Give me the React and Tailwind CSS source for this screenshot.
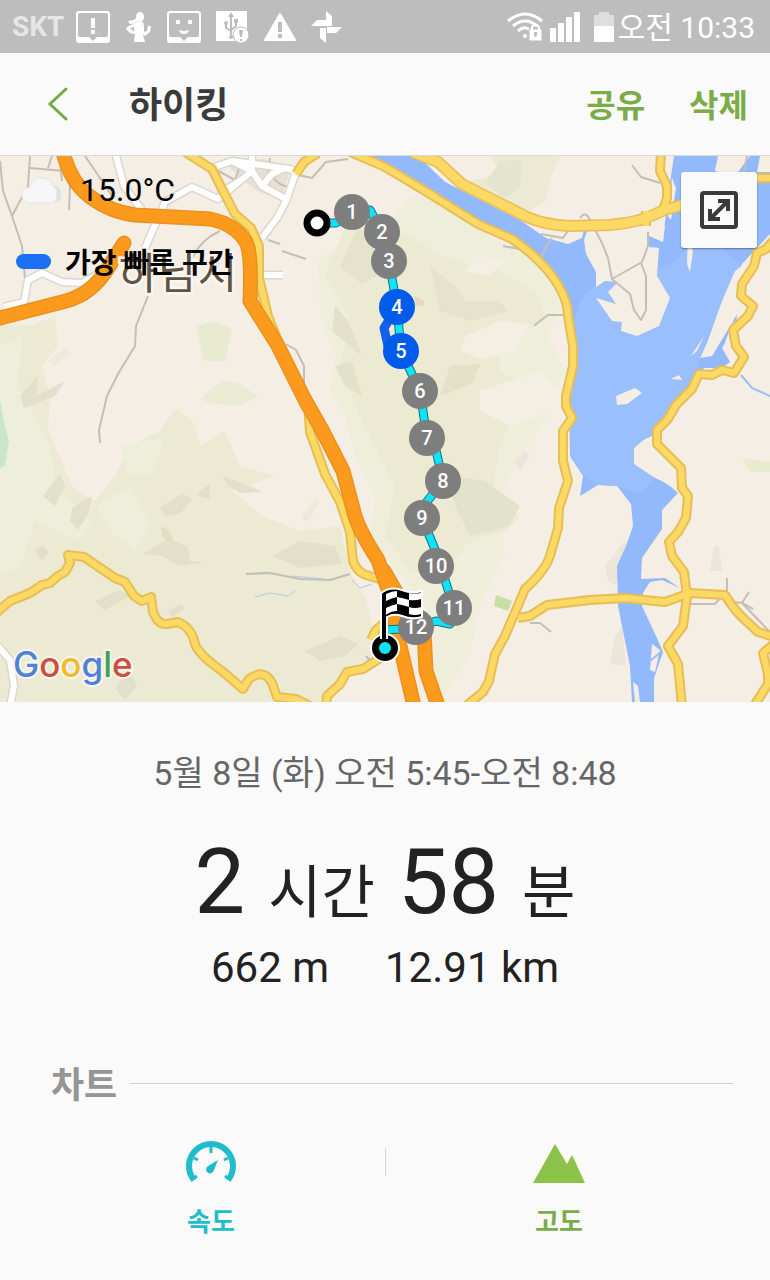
import React from 'react';

const FONT = "font-['Roboto','Noto_Sans_CJK_KR',sans-serif]";

const markers = [
  { n: 1, x: 352, y: 56 },
  { n: 2, x: 382, y: 76 },
  { n: 3, x: 389, y: 105 },
  { n: 4, x: 397, y: 151, fast: true },
  { n: 5, x: 401, y: 195, fast: true },
  { n: 6, x: 420, y: 235 },
  { n: 7, x: 427, y: 282 },
  { n: 8, x: 443, y: 325 },
  { n: 12, x: 416, y: 471 },
  { n: 9, x: 422, y: 362 },
  { n: 10, x: 436, y: 410 },
  { n: 11, x: 454, y: 452 },
];

const routePath =
  'M317 67L336 67L352 56L370 54L382 76L389 105L397 151L401 195L420 235L427 282L435 290L443 325L422 352L422 362L436 396L454 452L450 468L436 465L416 472L385 474';

const riverRoad =
  'M412 -4 L438 6 L462 28 L527 61 Q545 69 570 70 L610 69 Q640 67 664 54 L690 47';

const yellowRoads = [
  'M185 -4 L212 13 L222 33 L235 58 L251 72 L259 90 L259 122 L268 160 L282 195',
  'M296 18 L304 6 L318 -3',
  'M350 -4 L385 11 L430 38 L478 68 L512 83 Q537 100 552 120 Q568 142 568 160 L573 190 L573 210 L566 240 L566 250 L572 262 L563 275 L563 305 L568 325 L559 352 L558 372 L550 400 Q545 415 525 433 L505 480 L495 498 L489 525 L483 536 L466 550',
  'M518 462 L530 460 L547 449 L590 444 L625 442 L665 446 L690 437 L725 439 Q735 455 745 464 L758 476 L774 481',
  'M661 -4 L660 15 L667 30 L667 42 L663 54',
  'M646 55 L646 70',
  'M757 22 L774 22',
  'M774 84 L766 93 L757 97 L754 110 L742 128 L741 140 L753 150 L748 160 L733 174 L736 190 L744 201 L734 217 L722 214 L712 219 L699 218 L692 233 L676 249 L668 263 L657 274 L657 288 L681 312 L682 332 L688 340 L686 362 L678 376 L669 386 L672 400 L684 416 L687 440 L683 470 L668 490 L678 508 L682 550',
  'M774 488 L763 497 L768 518 L768 528 L754 550',
  'M308 246 L310 276 L325 318 L340 346 L350 376 L353 405 Q357 416 366 419 L390 426',
  'M-4 457 L10 445 L30 437 L42 429 L50 427 L58 420 L65 416 L70 407 L68 399 L84 401 L115 422 L125 426 L134 440 L142 445 L151 441 L153 456 Q158 469 167 468 L178 466 Q192 472 195 488 Q199 499 222 515 L243 533 L249 523 Q264 512 272 527 L277 541 L296 543 L312 551',
  'M326 550 L327 540 L340 528 L347 516 L363 513 L382 501',
  'M371 484 L376 474 L390 462',
];

const orangeRoads = [
  'M63 -4 Q70 25 89 40 Q110 56 135 59 L210 63 Q235 68 246 86 Q252 98 250 145 L277 188 L305 244 L322 274 L343 315 L355 360 Q360 376 378 404 L389 436 L400 490 L414 550',
  'M384 415 L404 450 L424 475 L426 515 L438 550',
  'M-4 163 L66 145 Q92 138 108 112 L124 87',
];

const whiteRoads = [
  'M115 -4 L124 30 L142 54',
  'M212 12 L232 5 L290 13 L296 16 L286 45 L277 62 L262 82',
  'M232 5 L252 15 L240 25 L220 42',
  'M252 15 L262 30 L284 42',
  'M262 30 L272 18 L285 12',
  'M145 92 L165 46 L192 31 L218 43 L228 32 L240 25',
  'M252 -4 L252 15',
  'M4 151 L24 146 L28 124 L42 117 L62 126 L82 127 L100 117',
  'M262 119 L283 119',
  'M-2 490 L10 504 L14 530 L10 550',
];

const greyRoads = [
  'M0 5 L3 35 L12 60 L22 90 L25 122',
  'M12 60 L28 30 L30 0',
  'M30 12 L65 15 L70 30 L69 54',
  'M60 5 L62 25',
  'M52 0 L48 12',
  'M85 0 L100 22 L112 40',
  'M148 140 L136 170 L135 190 L118 218 L107 240 L99 274 L100 287',
  'M192 103 Q200 84 220 75',
  'M282 95 L306 103',
  'M268 84 L280 88',
  'M286 188 L296 194 L304 210 L304 246',
  'M294 18 L312 22 L326 6 L348 3',
  'M213 12 L235 24 L242 4 L255 8',
  'M270 2 L268 18 L280 28 L290 32',
  'M580 62 Q585 54 590 64 L602 87 L608 102 L612 123 L642 106 L648 90 L648 76',
  'M612 123 L630 138 L634 154 L641 164 L646 154 L646 120 L641 107',
  'M632 9 L641 21 L660 27',
  'M535 170 L536 168 L548 159 L563 159',
  'M552 82 L541 100',
  'M503 90 L520 93',
  'M541 78 L563 82 L570 72 L580 70',
  'M246 418 L270 417 L300 423 L330 424 L350 418',
  'M530 467 L540 467 L551 476',
  'M727 422 L727 445 L742 447 L753 453',
  'M742 447 L769 475',
  'M742 447 L749 436',
  'M690 448 L715 448 L722 440',
  'M744 15 L748 -4',
];

const terrain = [
  { c: '#efeedb', d: 'M345 60 L395 60 L410 40 L440 45 L490 80 L540 105 L560 150 L548 180 L565 215 L545 265 L520 300 L500 340 L505 400 L480 450 L470 500 L440 546 L420 500 L430 460 L405 425 L370 380 L375 340 L355 300 L345 260 L330 235 L335 200 L320 160 L318 105 L345 85 Z' },
  { c: '#ecead2', d: 'M350 60 L400 75 L440 100 L500 115 L540 140 L545 165 L500 190 L500 215 L530 230 L500 290 L490 350 L520 360 L505 375 L470 385 L440 420 L410 415 L385 380 L395 330 L360 260 L340 210 L350 160 L325 120 Z' },
  { c: '#ecead2', d: 'M0 168 L30 170 L55 160 L58 190 L42 210 L50 240 L48 274 L72 330 L95 345 L115 320 L130 290 L160 275 L176 252 L195 268 L200 290 L225 275 L240 310 L275 320 L232 335 L262 360 L300 375 L340 370 L352 420 L365 440 L380 500 L350 520 L320 546 L0 546 Z' },
  { c: '#eeefdb', d: 'M0 190 L22 180 L18 230 L50 290 L55 330 L92 365 L80 385 L35 365 L20 410 L0 420 Z' },
  { c: '#eeefdb', d: 'M96 350 L130 330 L150 370 L135 395 L115 380 Z' },
  { c: '#eeefdb', d: 'M120 290 L165 282 L150 320 L128 318 Z' },
  { c: '#e8ebcf', d: 'M196 170 L215 165 L232 172 L225 205 L204 205 Z' },
  { c: '#e9ebd3', d: 'M200 243 L222 224 L240 228 L258 240 L240 250 L212 248 Z' },
  { c: '#ecead2', d: 'M490 0 L560 0 L552 18 L545 45 L530 55 L495 42 L470 25 L500 18 Z' },
  { c: '#e5e4cc', d: 'M500 5 L522 4 L520 32 L505 42 L485 28 Z' },
  { c: '#e5e3cb', d: 'M358 70 L375 85 L385 115 L362 128 L340 112 Z' },
  { c: '#e5e3cb', d: 'M430 110 L455 130 L465 145 L500 145 L508 155 L470 165 L440 155 Z' },
  { c: '#f3efe2', d: 'M475 100 L505 105 L490 120 L465 115 Z' },
  { c: '#f3efe2', d: 'M465 180 L500 165 L530 168 L515 195 L480 203 L460 195 Z' },
  { c: '#f3efe2', d: 'M480 235 L540 215 L565 240 L540 260 L510 270 L480 255 Z' },
  { c: '#e3e2ca', d: 'M448 320 L485 325 L520 350 L510 370 L470 380 L455 350 Z' },
  { c: '#e3e2c9', d: 'M450 210 L480 208 L472 228 L440 240 Z' },
  { c: '#e3e2c9', d: 'M335 210 L352 205 L362 240 L345 230 Z' },
  { c: '#e3e1ca', d: 'M335 150 L348 165 L362 200 L350 190 L332 175 Z' },
  { c: '#e3e1ca', d: 'M43 340 L60 318 L65 330 L55 350 Z' },
  { c: '#e2e0ca', d: 'M72 352 L92 340 L88 358 L78 374 L70 365 Z' },
  { c: '#e2e0ca', d: 'M160 352 L182 337 L192 343 L180 358 L165 360 Z' },
  { c: '#e2e0ca', d: 'M143 398 L168 383 L188 390 L190 405 L207 406 L180 410 L162 400 Z' },
  { c: '#e2e0ca', d: 'M200 335 L210 328 L210 343 L198 340 Z' },
  { c: '#e2e0ca', d: 'M222 320 L245 328 L262 336 L240 337 L228 330 Z' },
  { c: '#e2e0ca', d: 'M35 395 L42 389 L49 396 L42 405 Z' },
  { c: '#e2e0ca', d: 'M95 445 L118 434 L130 440 L105 454 Z' },
  { c: '#e2e0ca', d: 'M168 455 L182 448 L185 452 L172 461 Z' },
  { c: '#e2e0ca', d: 'M272 400 L300 385 L335 390 L342 408 L300 412 Z' },
  { c: '#e2e0ca', d: 'M305 495 L340 480 L358 488 L345 500 L320 505 Z' },
  { c: '#e2e0ca', d: 'M115 532 L130 515 L137 530 L125 544 Z' },
  { c: '#e2e0ca', d: 'M20 240 L38 220 L36 240 L65 225 L55 240 L24 252 Z' },
  { c: '#efe8dd', d: 'M300 362 L315 342 L320 346 L308 366 Z' },
  { c: '#efe8dd', d: 'M48 205 L65 192 L72 198 L55 210 Z' },
  { c: '#ece5da', d: 'M605 410 L625 385 L628 395 L615 430 L608 425 Z' },
  { c: '#ece5da', d: 'M710 415 L714 390 L719 390 L722 415 Z' },
  { c: '#ece5da', d: 'M615 480 L622 470 L626 510 L610 508 Z' },
  { c: '#ece5da', d: 'M515 305 L525 295 L530 300 L520 315 Z' },
  { c: '#e8ebcf', d: 'M742 302 L770 306 L770 316 L750 316 Z' },
  { c: '#c9e6cd', d: 'M0 245 L5 270 L9 285 L5 310 L0 312 Z' },
  { c: '#c8dfa4', d: 'M496 439 L512 445 L508 455 L494 450 Z' },
  { c: '#e6dcc0', d: 'M161 370 L168 374 L174 383 L168 387 L162 380 Z' },
  { c: '#e8d8bd', d: 'M415 140 L424 145 L424 150 L415 150 Z' },
  { c: '#e7e0d6', d: 'M228 10 L262 2 L290 14 L282 40 L262 38 L245 26 Z' },
];

function StatusIcons() {
  return (
    <div className="flex items-center gap-[15px]">
      <svg width="34" height="32" viewBox="0 0 34 32" aria-hidden="true">
        <path fill="#fff" fillRule="evenodd" d="M3 0H31Q34 0 34 3V29Q34 32 31 32H3Q0 32 0 29V3Q0 0 3 0ZM4 2Q2 2 2 4V24Q2 26 4 26H13L17 30L21 26H30Q32 26 32 24V4Q32 2 30 2Z" />
        <path fill="#fff" d="M15 7H19V17H15ZM15 19H19V23H15Z" />
      </svg>
      <svg width="27" height="32" viewBox="0 0 27 32" aria-hidden="true">
        <ellipse cx="15" cy="6" rx="4" ry="5" fill="#fff" />
        <path fill="#fff" d="M12 6L9 9L3 10L5 13L11 12L13 10ZM11 11Q15 10 18 11L19 15L19 21L22 20L23 15L26 15L25 21L20 25L18 24L20 31H9L10 23L5 22L1 18L2 16L8 13ZM9 16L5 17L9 21Z" />
      </svg>
      <svg width="34" height="32" viewBox="0 0 34 32" aria-hidden="true">
        <path fill="#fff" fillRule="evenodd" d="M3 0H31Q34 0 34 3V29Q34 32 31 32H3Q0 32 0 29V3Q0 0 3 0ZM4 2Q2 2 2 4V24Q2 26 4 26H13L17 30L21 26H30Q32 26 32 24V4Q32 2 30 2Z" />
        <path fill="#fff" d="M9 9H13V13H9ZM21 9H25V13H21ZM12 19Q17 21 22 19Q21 23 17 23Q13 23 12 19Z" />
      </svg>
      <svg width="33" height="34" viewBox="0 0 33 34" aria-hidden="true">
        <path fill="#fff" d="M0 1H31V31H0Z" />
        <path fill="none" stroke="#bdbdbd" strokeWidth="2" d="M15 5V27M15 21L10 18V14M15 20L20 16V13" />
        <path fill="#bdbdbd" d="M12 7L15 2L18 7ZM18 9H22V13H18Z" />
        <circle cx="10" cy="13" r="2" fill="#bdbdbd" />
        <circle cx="15" cy="27" r="2" fill="#bdbdbd" />
        <circle cx="25" cy="25" r="8" fill="#fff" stroke="#bdbdbd" strokeWidth="1" />
        <path fill="#bdbdbd" d="M23 20H27L26 27H24ZM24 29H26V31H24Z" />
      </svg>
      <svg width="32" height="30" viewBox="0 0 32 30" aria-hidden="true">
        <path fill="#fff" stroke="#fff" strokeWidth="2" strokeLinejoin="round" d="M16 2L31 28H1Z" />
        <path fill="#bdbdbd" d="M14 10H18V20H14ZM14 22H18V26H14Z" />
      </svg>
      <svg width="31" height="32" viewBox="0 0 31 32" aria-hidden="true">
        <path fill="#fff" d="M15 0L21 5V15H15ZM31 16L25 22H16V16ZM15 32L9 27V17H15ZM0 15L6 9H15V15Z" />
      </svg>
    </div>
  );
}

function StatusBar() {
  return (
    <div className="flex h-[53px] items-center justify-between bg-[#bdbdbd] pl-3 pr-[15px] text-white">
      <div className="flex items-center gap-3">
        <span className="text-[28px] leading-none font-bold text-[#e6e6e6]">SKT</span>
        <StatusIcons />
      </div>
      <div className="flex items-center">
        <svg className="mr-[6px]" width="37" height="30" viewBox="0 0 37 30" aria-hidden="true">
          <g fill="none" stroke="#fff" strokeWidth="3">
            <path d="M1 9Q18 -5 35 9" />
            <path d="M6 14Q18 4 30 14" />
            <path d="M11 19Q17 13 23 18" />
          </g>
          <circle cx="18" cy="24" r="2" fill="#fff" />
          <path fill="#fff" stroke="#bdbdbd" d="M22 17H35V29H22Z" />
          <path fill="none" stroke="#fff" strokeWidth="2" d="M25 18V16Q25 13 28 13Q32 13 32 16V18" />
          <path fill="#bdbdbd" d="M27 20H30V23L29 25H28L27 23Z" />
        </svg>
        <svg className="mr-[14px]" width="30" height="30" viewBox="0 0 30 30" aria-hidden="true">
          <path fill="#fff" d="M0 16H6V30H0ZM8 11H14V30H8ZM16 5H22V30H16ZM24 0H30V30H24Z" />
        </svg>
        <svg className="mr-1" width="20" height="30" viewBox="0 0 20 30" aria-hidden="true">
          <path fill="#dedede" d="M5 0H15V3H20V14H0V3H5Z" />
          <path fill="#fff" d="M0 14H20V30H0Z" />
        </svg>
        <span className="pt-[2px] text-[30px] leading-none">오전 10:33</span>
      </div>
    </div>
  );
}

function Header() {
  return (
    <header className="flex h-[103px] items-center border-b border-[#d8d8d8] pl-10 pr-[22px]">
      <button type="button" aria-label="뒤로" className="flex w-[89px] cursor-pointer pl-2">
        <svg width="20" height="34" viewBox="0 0 20 34" aria-hidden="true">
          <path fill="none" stroke="#74ab45" strokeWidth="3" strokeLinecap="round" d="M18 2L2 17L18 32" />
        </svg>
      </button>
      <h1 className="flex-1 pt-[3px] text-[36px] leading-none font-bold text-[#3a3a3a]">하이킹</h1>
      <div className="flex gap-[44px] pt-[3px] text-[32px] leading-none text-[#7aac48]">
        <button type="button" className="cursor-pointer font-bold">공유</button>
        <button type="button" className="cursor-pointer font-bold">삭제</button>
      </div>
    </header>
  );
}

function TrailMap() {
  return (
    <svg className="block h-auto w-full" viewBox="0 0 770 546" role="img" aria-label="하이킹 경로">
      <rect width="770" height="546" fill="#f5eee5" />
      {terrain.map((t) => (
        <path key={t.d} d={t.d} fill={t.c} />
      ))}

      {/* river and lake */}
      <path
        fill="#92b9fb"
        d="M358 0H418L445 26L520 64L546 82L568 88L582 82L584 74L664 74L668 40L674 0H770V78L742 108L728 135L715 170L700 202L712 200L730 170L737 155L736 172L722 192L730 206L722 212H704L690 233L675 250L660 272L650 281Q635 285 634 292V308Q640 317 655 322Q668 327 678 337L662 354V373L642 402L641 423L665 422L680 432L662 424L650 426L643 437L642 450L656 480L663 496L654 522V546H632L630 510L618 450L617 410L626 390L633 370L631 348L617 330L598 329L580 340L583 320L570 300L568 160Q560 130 532 97L505 78L430 36L385 10Z"
      />
      <path fill="#9abffd" d="M580 145Q600 120 620 128L670 110L690 90L720 90L740 108L715 165L700 202L690 233L655 275L634 292L634 308L655 322L640 338L617 330L598 329L583 318L570 298L570 180Z" />
      <path fill="#f5eee5" d="M584 84L588 72H650L665 70L663 86L649 80V91L659 92L657 120L670 142L659 170L637 180L621 175L622 166L612 165L596 142L616 148L608 136L618 126L605 125L596 131V116L586 98Z" />
      <path fill="#f5eee5" d="M616 240L635 232L642 237L627 248L617 249ZM671 223L679 219L682 224ZM718 0H750L735 20L715 15ZM760 0H770V16H757ZM688 78L693 95L690 116L687 108ZM672 22L676 32L671 64L668 60ZM691 200L704 180L697 195Z" />
      <path fill="#f5eee5" d="M760 96L735 115L722 145L702 201L712 199L727 175L742 150Z" />
      <path fill="#f5eee5" d="M733 165L723 192L735 210L745 190ZM652 488L660 494L655 516L650 514ZM633 526L638 530L640 546H635Z" />
      <path fill="none" stroke="#9dbdf3" strokeWidth="2" d="M741 219L752 232L770 240M650 505L661 496M366 500L374 509" />
      <path fill="none" stroke="#b3c8ec" d="M248 418L268 416M292 420L324 423M255 441L270 437L288 440L295 435M352 424L360 432L372 428" />

      <g fill="none" stroke="#c4bfb6" strokeWidth="2" strokeLinejoin="round">
        {greyRoads.map((d) => <path key={d} d={d} />)}
      </g>
      <g fill="none" stroke="#dcd6cc" strokeWidth="9" strokeLinejoin="round">
        {whiteRoads.map((d) => <path key={d} d={d} />)}
      </g>
      <g fill="none" stroke="#ffffff" strokeWidth="6" strokeLinejoin="round">
        {whiteRoads.map((d) => <path key={d} d={d} />)}
      </g>
      <path fill="none" stroke="#e6be55" strokeWidth="12" strokeLinejoin="round" d={riverRoad} />
      <g fill="none" stroke="#e6be55" strokeWidth="10" strokeLinejoin="round">
        {yellowRoads.map((d) => <path key={d} d={d} />)}
      </g>
      <path fill="none" stroke="#fcd964" strokeWidth="9" strokeLinejoin="round" d={riverRoad} />
      <g fill="none" stroke="#fcd964" strokeWidth="6" strokeLinejoin="round">
        {yellowRoads.map((d) => <path key={d} d={d} />)}
      </g>
      <g fill="none" stroke="#e9911f" strokeWidth="15" strokeLinecap="round" strokeLinejoin="round">
        {orangeRoads.map((d) => <path key={d} d={d} />)}
      </g>
      <g fill="none" stroke="#fb9a1c" strokeWidth="12" strokeLinecap="round" strokeLinejoin="round">
        {orangeRoads.map((d) => <path key={d} d={d} />)}
      </g>

      <text x="178" y="133" textAnchor="middle" className="text-[43px]" fill="#5f5344" stroke="#fbf7f0" strokeWidth="5" paintOrder="stroke">
        하남시
      </text>

      {/* walked route */}
      <g fill="none" strokeLinejoin="round">
        <path stroke="#0d7484" strokeWidth="9" d={routePath} />
        <path stroke="#10e3f7" strokeWidth="7" d={routePath} />
        <path stroke="#1560ea" strokeWidth="9" d="M397 151L384 172L388 190L401 195" />
      </g>
      {markers.map((m) => (
        <g key={m.n}>
          <circle cx={m.x} cy={m.y} r="18" fill={m.fast ? '#005bea' : '#7e7e7e'} />
          <text x={m.x} y={m.y + 7} textAnchor="middle" className="text-[20px] font-medium" fill="#fff">
            {m.n}
          </text>
        </g>
      ))}

      {/* start */}
      <circle cx="317" cy="67" r="10" fill="#fff" stroke="#000" strokeWidth="7" />

      {/* finish flag */}
      <g stroke="#fff" strokeWidth="2" fill="#000">
        <circle cx="385" cy="492" r="14" />
        <path d="M381 437Q390 430 402 434Q412 438 422 435V461Q412 464 402 460Q394 457 387 461V482H381Z" />
      </g>
      <path fill="#000" d="M382 480H386V490H382Z" />
      <path fill="#fff" d="M386 438Q392 435 397 435V441Q392 442 386 445ZM409 437Q415 438 421 437V443Q415 445 409 444ZM397 441Q403 442 409 444V451Q403 449 397 448ZM386 452Q392 449 397 448V455Q391 455 386 459ZM409 451Q415 453 421 451V458Q415 460 409 458Z" />
      <circle cx="385" cy="492" r="6" fill="#10e3f7" />

      <text x="13" y="521" className="font-['Inter',sans-serif] text-[35px] font-medium" stroke="#f7f6ea" strokeWidth="4" paintOrder="stroke">
        <tspan fill="#4c81dc">G</tspan>
        <tspan fill="#cc4f3f">o</tspan>
        <tspan fill="#eebb2c">o</tspan>
        <tspan fill="#4c81dc">g</tspan>
        <tspan fill="#43a05c">l</tspan>
        <tspan fill="#cc4f3f">e</tspan>
      </text>
    </svg>
  );
}

function MapSection() {
  return (
    <section className="relative">
      <TrailMap />
      <div className="absolute top-4 left-4 flex flex-col gap-[32px] text-black">
        <div className="flex items-center gap-4">
          <svg className="ml-[5px]" width="43" height="28" viewBox="0 0 43 28" aria-hidden="true">
            <path fill="#dfe0e4" d="M18 14A11 11 0 0 1 34 10Q40 11 40 17Q42 24 35 26H20Z" />
            <path fill="#f6f6f8" stroke="#e6e6ea" d="M9 27Q1 26 1 19Q1 12 9 11Q11 2 20 2Q29 2 32 10Q36 12 36 19Q36 26 30 27Z" />
          </svg>
          <span className="text-[32px] leading-9">15.0°C</span>
        </div>
        <div className="flex items-center gap-[14px]">
          <span className="h-[15px] w-[35px] rounded-full bg-[#1c70f5]" />
          <span className="pt-[6px] text-[28px] leading-9 font-bold">가장 빠른 구간</span>
        </div>
      </div>
      <button
        type="button"
        aria-label="지도 확대"
        className="absolute top-4 right-[13px] flex size-[76px] cursor-pointer items-center justify-center rounded-[3px] bg-[#fafafa] shadow-[0_1px_2px_rgba(0,0,0,0.4)]"
      >
        <svg width="38" height="38" viewBox="0 0 38 38" aria-hidden="true">
          <rect x="2" y="2" width="34" height="34" rx="2" fill="none" stroke="#3a3a3a" strokeWidth="4" />
          <path fill="none" stroke="#3a3a3a" strokeWidth="4" d="M11 27L27 11M18 10H28V20M10 18V28H20" />
        </svg>
      </button>
    </section>
  );
}

function Summary() {
  return (
    <section className="flex flex-col items-center pt-[47px] text-[#222222]">
      <p className="text-[34px] leading-[48px] text-[#666666]">5월 8일 (화) 오전 5:45-오전 8:48</p>
      <p className="mt-[35px] flex items-baseline gap-[23px] text-[90px] leading-[102px]">
        <span>2</span>
        <span className="text-[58px]">시간</span>
        <span>58</span>
        <span className="text-[58px]">분</span>
      </p>
      <p className="flex gap-[56px] text-[42px] leading-[48px]">
        <span>662 m</span>
        <span>12.91 km</span>
      </p>
    </section>
  );
}

function ChartSection() {
  return (
    <section className="px-[37px] pt-[62px]">
      <div className="flex items-center gap-[13px] pl-[14px]">
        <h2 className="pt-[6px] text-[36px] leading-[52px] font-bold text-[#959595]">차트</h2>
        <span className="h-px flex-1 bg-[#cfcfcf]" />
      </div>
      <div className="mt-[28px] flex">
        <button type="button" className="flex flex-1 cursor-pointer flex-col items-center gap-5 text-[#1fbccb]">
          <svg width="52" height="44" viewBox="0 0 52 44" aria-hidden="true">
            <path fill="none" stroke="currentColor" strokeWidth="6" d="M9 40A22 22 0 1 1 43 40" />
            <path fill="none" stroke="currentColor" strokeWidth="3" d="M26 5V13M9 18L13 20M43 18L39 20M8 39L12 36M44 39L40 36" />
            <path fill="currentColor" d="M33 20L29 30A4 4 0 1 1 23 26Z" />
          </svg>
          <span className="text-[26px] leading-9 font-bold">속도</span>
        </button>
        <span className="-mr-px mt-2 h-7 w-px bg-[#d4d4d4]" />
        <button type="button" className="flex flex-1 cursor-pointer flex-col items-center gap-5 text-[#7aac48]">
          <svg width="52" height="44" viewBox="0 0 52 44" aria-hidden="true">
            <path fill="#8bc34a" d="M0 43L22 4L34 24L39 15L52 43Z" />
          </svg>
          <span className="text-[26px] leading-9 font-bold">고도</span>
        </button>
      </div>
    </section>
  );
}

export default function App() {
  return (
    <main className={`min-h-screen bg-[#fafafa] ${FONT}`}>
      <StatusBar />
      <Header />
      <MapSection />
      <Summary />
      <ChartSection />
    </main>
  );
}
